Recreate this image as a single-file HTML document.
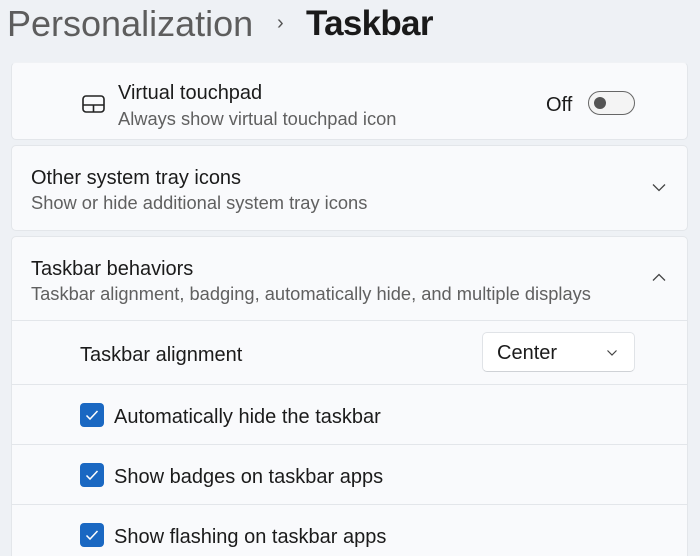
<!DOCTYPE html>
<html><head><style>
*{margin:0;padding:0;box-sizing:border-box}
html,body{width:700px;height:556px;overflow:hidden}
body{background:#eef1f5;font-family:"Liberation Sans",sans-serif;color:#1b1b1b;position:relative}
.abs{position:absolute}
.card{position:absolute;left:11px;width:677px;background:#f9fafc;border:1px solid #e3e6ea;border-radius:5px}
.t{position:absolute;font-size:20px;white-space:nowrap}
.s{position:absolute;font-size:18.3px;color:#606060;white-space:nowrap}
.div{position:absolute;left:11px;width:677px;height:1px;background:#e3e6ea}
.cb{position:absolute;left:80px;width:24px;height:24px;background:#1a68c2;border-radius:4px}
.cb svg{position:absolute;left:4px;top:4px}
</style></head><body>
<div class="abs" style="left:7px;top:3px;font-size:36px;color:#5d5d5d;white-space:nowrap">Personalization</div>
<div class="abs" style="left:277px;top:12px;font-size:20px;color:#555">›</div>
<div class="abs" style="left:306px;top:4px;font-size:35px;color:#1a1a1a;font-weight:bold;letter-spacing:-0.7px">Taskbar</div>

<div class="card" style="top:62px;height:78px;border-top-color:#f0f2f5"></div>
<svg class="abs" style="left:82px;top:95px" width="24" height="18" viewBox="0 0 24 18"><rect x="1" y="1" width="21" height="16" rx="3" fill="none" stroke="#222" stroke-width="1.6"/><line x1="1" y1="10" x2="22" y2="10" stroke="#222" stroke-width="1.6"/><line x1="11.5" y1="10" x2="11.5" y2="17" stroke="#222" stroke-width="1.6"/></svg>
<div class="t" style="left:118px;top:82px">Virtual touchpad</div>
<div class="s" style="left:118px;top:108px">Always show virtual touchpad icon</div>
<div class="t" style="left:546px;top:94px">Off</div>
<div class="abs" style="left:588px;top:91px;width:47px;height:24px;border:1.5px solid #666;border-radius:12px;background:#f4f4f4"></div>
<div class="abs" style="left:594px;top:97px;width:12px;height:12px;border-radius:6px;background:#555"></div>

<div class="card" style="top:145px;height:86px"></div>
<div class="t" style="left:31px;top:167px">Other system tray icons</div>
<div class="s" style="left:31px;top:192px">Show or hide additional system tray icons</div>
<svg class="abs" style="left:652px;top:183px" width="14" height="9" viewBox="0 0 14 9"><path d="M1 1.5l6 6 6-6" fill="none" stroke="#444" stroke-width="1.3"/></svg>

<div class="card" style="top:236px;height:330px"></div>
<div class="t" style="left:31px;top:258px">Taskbar behaviors</div>
<div class="s" style="left:31px;top:283px">Taskbar alignment, badging, automatically hide, and multiple displays</div>
<svg class="abs" style="left:652px;top:273px" width="14" height="9" viewBox="0 0 14 9"><path d="M1 7.5l6-6 6 6" fill="none" stroke="#444" stroke-width="1.3"/></svg>
<div class="div" style="top:320px"></div>
<div class="t" style="left:80px;top:344px">Taskbar alignment</div>
<div class="abs" style="left:482px;top:332px;width:153px;height:40px;background:#fff;border:1px solid #e0e3e7;border-bottom-color:#cfd2d6;border-radius:5px"></div>
<div class="t" style="left:497px;top:342px">Center</div>
<svg class="abs" style="left:606px;top:349px" width="12" height="8" viewBox="0 0 12 8"><path d="M1.5 1.5l4.5 4.5 4.5-4.5" fill="none" stroke="#444" stroke-width="1.2"/></svg>
<div class="div" style="top:384px"></div>
<div class="cb" style="top:403px"><svg width="16" height="16" viewBox="0 0 16 16"><path d="M2.5 8.5l3.5 3.5 7.5-8" fill="none" stroke="#fff" stroke-width="1.5"/></svg></div>
<div class="t" style="left:114px;top:406px">Automatically hide the taskbar</div>
<div class="div" style="top:444px"></div>
<div class="cb" style="top:463px"><svg width="16" height="16" viewBox="0 0 16 16"><path d="M2.5 8.5l3.5 3.5 7.5-8" fill="none" stroke="#fff" stroke-width="1.5"/></svg></div>
<div class="t" style="left:114px;top:466px">Show badges on taskbar apps</div>
<div class="div" style="top:504px"></div>
<div class="cb" style="top:523px"><svg width="16" height="16" viewBox="0 0 16 16"><path d="M2.5 8.5l3.5 3.5 7.5-8" fill="none" stroke="#fff" stroke-width="1.5"/></svg></div>
<div class="t" style="left:114px;top:526px">Show flashing on taskbar apps</div>
</body></html>
